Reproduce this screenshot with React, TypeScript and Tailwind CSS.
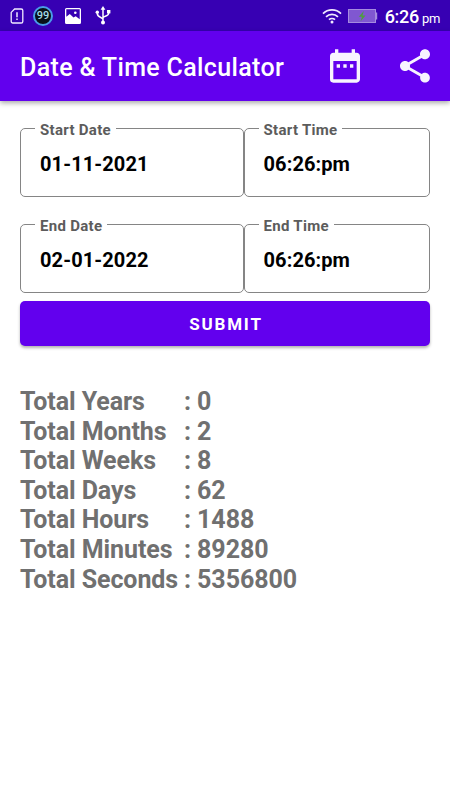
import type { ReactNode } from "react"

const results = [
  { label: "Total Years", value: "0" },
  { label: "Total Months", value: "2" },
  { label: "Total Weeks", value: "8" },
  { label: "Total Days", value: "62" },
  { label: "Total Hours", value: "1488" },
  { label: "Total Minutes", value: "89280" },
  { label: "Total Seconds", value: "5356800" },
]

function StatusBar() {
  return (
    <div className="flex h-[31px] items-center justify-between bg-[#3700b3] text-white">
      <div className="flex items-center pl-[10px]">
        <svg width="14" height="16" viewBox="0 0 14 16" fill="none" stroke="#f1eaff" strokeWidth="1.3">
          <path d="M4.6 1h6.6A1.6 1.6 0 0 1 12.8 2.6v10.8A1.6 1.6 0 0 1 11.2 15H2.8A1.6 1.6 0 0 1 1.2 13.4V4.4z" />
          <path d="M7 4.3v5M7 10.5v1.6" strokeWidth="1.5" />
        </svg>
        <div className="ml-[9px] flex h-5 w-5 items-center justify-center rounded-full border-2 border-[#4a9be8] bg-[#081018] text-[11px] leading-none font-medium text-[#a5dce8]">
          99
        </div>
        <svg className="ml-3" width="16" height="16" viewBox="0 0 16 16">
          <path
            fill="#fff"
            fillRule="evenodd"
            d="M1.5 0h13A1.5 1.5 0 0 1 16 1.5v13a1.5 1.5 0 0 1-1.5 1.5h-13A1.5 1.5 0 0 1 0 14.5v-13A1.5 1.5 0 0 1 1.5 0zM1.3 1.3v7.5L4.8 6l3.7 3.5 2.2-1.3 4 3V1.3z"
          />
          <circle cx="10.3" cy="4.7" r="1.3" fill="#fff" />
        </svg>
        <svg className="ml-[14px]" width="16" height="19" viewBox="0 0 16 19" fill="none" stroke="#fff" strokeWidth="1.5">
          <path d="M8 3v13M8 13.5C8 11 2.3 12 2.3 7.5M8 12c0-2.3 5.7-1.3 5.7-5" />
          <path d="M8 0l2.4 3.8H5.6z" fill="#fff" stroke="none" />
          <circle cx="8" cy="16.5" r="2" fill="#fff" stroke="none" />
          <circle cx="2.3" cy="6.3" r="1.7" fill="#fff" stroke="none" />
          <path d="M12 4h3.4v3.4H12z" fill="#fff" stroke="none" />
        </svg>
      </div>
      <div className="flex items-center pr-[10px]">
        <svg width="20" height="16" viewBox="0 0 20 16" fill="none" stroke="#f1eaff" strokeWidth="1.7">
          <path d="M1 5.6a12.7 12.7 0 0 1 18 0M4 8.8a8.5 8.5 0 0 1 12 0M7 11.7a4.3 4.3 0 0 1 6 0" />
          <circle cx="10" cy="14" r="1.5" fill="#f1eaff" stroke="none" />
        </svg>
        <svg className="ml-[6px]" width="30" height="14" viewBox="0 0 30 14">
          <rect x="0.5" y="0.5" width="27" height="13" fill="#8057d1" stroke="#a58bdf" />
          <path d="M28 3.5h1.2v7H28z" fill="#a58bdf" />
          <path d="M15.8 2l-5 5.8h3.1l-1.3 4.4 4.9-5.8h-3z" fill="#4d9e3d" />
        </svg>
        <div className="ml-[7px] flex items-baseline pt-[2px] leading-none">
          <span className="text-[18px] font-medium tracking-[-0.3px]">6:26</span>
          <span className="ml-[3px] text-[13px] tracking-[-0.3px]">pm</span>
        </div>
      </div>
    </div>
  )
}

function Header() {
  return (
    <header className="relative flex h-[70px] items-center justify-between bg-[#6200ee] pr-[15px] pl-5 text-white shadow-[0_2px_5px_rgba(0,0,0,0.35)]">
      <h1 className="pt-[3px] text-[25px] font-medium tracking-[0.35px]">Date &amp; Time Calculator</h1>
      <div className="flex gap-[30px]">
        <svg width="40" height="40" viewBox="0 0 24 24" fill="#f8f3ff">
          <path d="M9 11H7v2h2v-2zm4 0h-2v2h2v-2zm4 0h-2v2h2v-2zm2-7h-1V2h-2v2H8V2H6v2H5c-1.11 0-1.99.9-1.99 2L3 20a2 2 0 0 0 2 2h14c1.1 0 2-.9 2-2V6c0-1.1-.9-2-2-2zm0 16H5V9h14v11z" />
        </svg>
        <svg width="40" height="40" viewBox="0 0 24 24" fill="#f8f3ff">
          <path d="M18 16.08c-.76 0-1.44.3-1.96.77L8.91 12.7c.05-.23.09-.46.09-.7s-.04-.47-.09-.7l7.05-4.11c.54.5 1.25.81 2.04.81 1.66 0 3-1.34 3-3s-1.34-3-3-3-3 1.34-3 3c0 .24.04.47.09.7L8.04 9.81C7.5 9.31 6.79 9 6 9c-1.66 0-3 1.34-3 3s1.34 3 3 3c.79 0 1.5-.31 2.04-.81l7.12 4.16c-.05.21-.08.43-.08.65 0 1.61 1.31 2.92 2.92 2.92s2.92-1.31 2.92-2.92-1.31-2.92-2.92-2.92z" />
        </svg>
      </div>
    </header>
  )
}

function Field({ label, children }: { label: string; children: ReactNode }) {
  return (
    <fieldset className="h-[78px] min-w-0 rounded-[5px] border border-[#858585] pl-[14px]">
      <legend className="h-[18px] px-[5px] text-[15px] leading-[22px] font-bold tracking-[0.3px] text-[#5c5c5c]">
        {label}
      </legend>
      <div className="pt-[15px] pl-[5px] text-[20px] leading-6 font-bold tracking-[0.1px] text-black">{children}</div>
    </fieldset>
  )
}

export default function App() {
  return (
    <div className="h-[800px] w-[450px] overflow-hidden bg-white font-['Roboto',sans-serif]">
      <StatusBar />
      <Header />
      <main className="px-5 pt-[18px]">
        <div className="grid grid-cols-[223.5px_186.5px] gap-y-[18px]">
          <Field label="Start Date">01-11-2021</Field>
          <Field label="Start Time">06:26:pm</Field>
          <Field label="End Date">02-01-2022</Field>
          <Field label="End Time">06:26:pm</Field>
        </div>
        <button className="mt-2 block h-[45px] w-full rounded-[5px] bg-[#6200ee] pt-[3px] pl-[2px] text-[17px] font-bold tracking-[1.8px] text-white shadow-[0_2px_3px_rgba(0,0,0,0.3)]">
          SUBMIT
        </button>
        <div className="mt-[41px] text-[25px] leading-[29.6px] font-bold tracking-[-0.08px] text-[#707070]">
          {results.map((row) => (
            <div key={row.label} className="flex">
              <span className="w-[164px] whitespace-nowrap">{row.label}</span>
              <span>: {row.value}</span>
            </div>
          ))}
        </div>
      </main>
    </div>
  )
}
